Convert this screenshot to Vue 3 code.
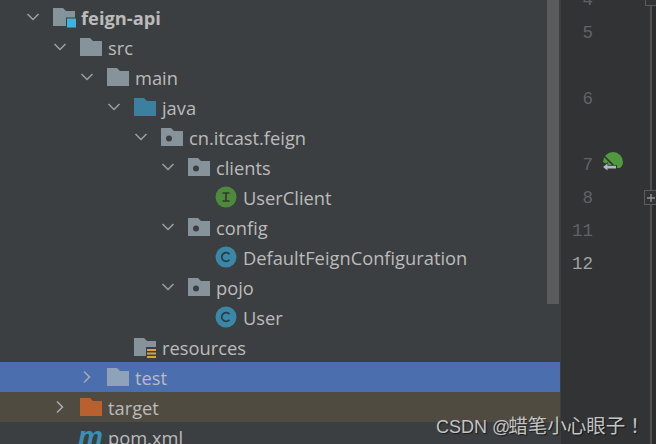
<script setup>
const rows = [
  { name: "feign-api", depth: 0, arrow: "down", icon: "module", bold: true },
  { name: "src", depth: 1, arrow: "down", icon: "folder" },
  { name: "main", depth: 2, arrow: "down", icon: "folder" },
  { name: "java", depth: 3, arrow: "down", icon: "source" },
  { name: "cn.itcast.feign", depth: 4, arrow: "down", icon: "package" },
  { name: "clients", depth: 5, arrow: "down", icon: "package" },
  { name: "UserClient", depth: 6, icon: "interface" },
  { name: "config", depth: 5, arrow: "down", icon: "package" },
  { name: "DefaultFeignConfiguration", depth: 6, icon: "class" },
  { name: "pojo", depth: 5, arrow: "down", icon: "package" },
  { name: "User", depth: 6, icon: "class" },
  { name: "resources", depth: 3, icon: "resources" },
  { name: "test", depth: 2, arrow: "right", icon: "folder", state: "selected" },
  { name: "target", depth: 1, arrow: "right", icon: "excluded", state: "ignored" },
  { name: "pom.xml", depth: 1, icon: "maven" },
];

const lines = [
  { n: 4, cls: "h-33" },
  { n: 5, cls: "h-66" },
  { n: 6, cls: "h-66" },
  { n: 7, cls: "h-33", impl: true },
  { n: 8, cls: "h-33" },
  { n: 11, cls: "h-33" },
  { n: 12, cls: "h-33", current: true },
];

const folderPath = "M1 3h10l3 3h9v15H1z";
</script>

<template>
  <div class="ide">
    <aside class="project">
      <div class="tree">
        <div
          v-for="row in rows"
          :key="row.name"
          class="row"
          :class="[row.state, `depth-${row.depth}`]"
        >
          <span class="arrow">
            <svg v-if="row.arrow === 'down'" width="14" height="14" viewBox="0 0 14 14">
              <path d="M1.5 4l5.5 5.5L12.5 4" fill="none" stroke="#9da0a2" stroke-width="1.5" />
            </svg>
            <svg v-else-if="row.arrow === 'right'" width="14" height="14" viewBox="0 0 14 14">
              <path d="M4 1.5L9.5 7 4 12.5" fill="none" stroke="#a9acae" stroke-width="1.5" />
            </svg>
          </span>

          <span class="icon">
            <svg v-if="row.icon === 'folder'" width="24" height="24" viewBox="0 0 24 24">
              <path :d="folderPath" :fill="row.state === 'selected' ? '#8ea3ba' : '#87939a'" />
            </svg>
            <svg v-else-if="row.icon === 'source'" width="24" height="24" viewBox="0 0 24 24">
              <path :d="folderPath" fill="#3c80a0" />
            </svg>
            <svg v-else-if="row.icon === 'excluded'" width="24" height="24" viewBox="0 0 24 24">
              <path :d="folderPath" fill="#b8602e" />
            </svg>
            <svg v-else-if="row.icon === 'package'" width="24" height="24" viewBox="0 0 24 24">
              <path :d="folderPath" fill="#87939a" />
              <circle cx="9" cy="13.5" r="3" fill="#3c3f41" />
            </svg>
            <svg v-else-if="row.icon === 'module'" width="24" height="24" viewBox="0 0 24 24">
              <path :d="folderPath" fill="#87939a" />
              <rect x="14" y="12.5" width="11" height="11" fill="#3c3f41" />
              <rect x="15" y="13.5" width="9" height="9" fill="#3cb4e0" />
            </svg>
            <svg v-else-if="row.icon === 'resources'" width="24" height="24" viewBox="0 0 24 24">
              <path :d="folderPath" fill="#87939a" />
              <rect x="13" y="12" width="12" height="13" fill="#3c3f41" />
              <path d="M14 14h9v2h-9zM14 17.5h9v2h-9zM14 21h9v2h-9z" fill="#d9a33a" />
            </svg>
            <svg v-else-if="row.icon === 'interface'" width="24" height="24" viewBox="0 0 24 24">
              <circle cx="12" cy="12" r="10.5" fill="#4e8a3c" />
              <path d="M8.5 8h7M8.5 16h7M12 8v8" stroke="#2f3a2c" stroke-width="1.7" fill="none" />
            </svg>
            <svg v-else-if="row.icon === 'class'" width="24" height="24" viewBox="0 0 24 24">
              <circle cx="12" cy="12" r="10.5" fill="#3a87a8" />
              <path d="M15.5 9.2a4.4 4.4 0 1 0 0 5.6" stroke="#283a44" stroke-width="1.7" fill="none" />
            </svg>
            <svg v-else-if="row.icon === 'maven'" width="24" height="24" viewBox="0 0 24 24">
              <text x="-1" y="21" class="maven-m">m</text>
            </svg>
          </span>

          <span class="label" :class="{ bold: row.bold }">{{ row.name }}</span>
        </div>
      </div>
      <div class="thumb"></div>
    </aside>

    <section class="gutter">
      <div class="numbers">
        <div
          v-for="line in lines"
          :key="line.n"
          class="line"
          :class="[line.cls, { current: line.current }]"
        >
          <span class="num">{{ line.n }}</span>
          <span class="mark">
            <svg v-if="line.impl" width="24" height="24" viewBox="0 0 24 24">
              <path d="M2 11a10 10 0 0 1 20 0c0 2.400-1 4.400-3 6h-6z" fill="#4f9a3f" />
              <path d="M3 5l13 13" stroke="#313335" stroke-width="1.7" />
              <path d="M1 16l6-5v3h9v4H7v3z" fill="#313335" />
              <path d="M2 16l4.500-3.600v2.400h8.500v2.600H6.500v2.200z" fill="#aeb9c0" />
            </svg>
          </span>
        </div>
      </div>
      <div class="fold">
        <span class="fold-end"></span>
        <span class="fold-plus">
          <svg width="10" height="10" viewBox="0 0 10 10">
            <path d="M1 5h8M5 1v8" stroke="#8f9193" stroke-width="1.4" />
          </svg>
        </span>
      </div>
    </section>

    <div class="watermark">CSDN @<span class="cjk">蜡笔小心眼子</span><span class="bang">！</span></div>
  </div>
</template>

<style scoped>
.ide {
  position: relative;
  width: 656px;
  height: 444px;
  display: flex;
  overflow: hidden;
  background: #313335;
  font-family: "Open Sans", "Noto Sans", sans-serif;
}

.project {
  position: relative;
  width: 561px;
  height: 100%;
  background: #3c3f41;
  flex-shrink: 0;
}

.tree {
  width: 560px;
  padding-top: 2px;
}

.row {
  height: 30px;
  display: flex;
  align-items: center;
  color: #bbbbbb;
  font-size: 18.3px;
}

.row.selected {
  background: #4b6eaf;
}

.row.ignored {
  background: #4f4b41;
}

.depth-0 { padding-left: 26px; }
.depth-1 { padding-left: 53px; }
.depth-2 { padding-left: 80px; }
.depth-3 { padding-left: 107px; }
.depth-4 { padding-left: 134px; }
.depth-5 { padding-left: 161px; }
.depth-6 { padding-left: 188px; }

.arrow {
  width: 14px;
  height: 14px;
  margin-right: 12px;
  flex-shrink: 0;
}

.icon {
  width: 24px;
  height: 24px;
  margin-right: 5px;
  flex-shrink: 0;
}

.icon svg,
.arrow svg,
.mark svg {
  display: block;
  overflow: visible;
}

.maven-m {
  font-family: "Liberation Sans", sans-serif;
  font-size: 28px;
  font-weight: 700;
  font-style: italic;
  fill: #3a8fb5;
}

.label {
  white-space: nowrap;
}

.bold {
  font-weight: 700;
}

.thumb {
  position: absolute;
  top: 0;
  left: 547px;
  width: 12px;
  height: 304px;
  background: #595b5d;
}

.gutter {
  flex: 1;
  display: flex;
}

.numbers {
  width: 89px;
  margin-top: -16px;
  flex-shrink: 0;
}

.line {
  display: flex;
  align-items: flex-start;
  color: #606366;
  font-family: "Liberation Mono", monospace;
  font-size: 17.5px;
  line-height: 33px;
}

.h-33 { height: 33px; }
.h-66 { height: 66px; }

.line.current {
  color: #a4a3a3;
}

.num {
  width: 32px;
  text-align: right;
  flex-shrink: 0;
}

.mark {
  margin: 2px 0 0 8px;
}

.fold {
  position: relative;
  flex: 1;
  border-left: 2px solid #4d4f51;
  background: #2b2b2b;
}

.fold-end {
  position: absolute;
  left: -7px;
  top: -8px;
  width: 13px;
  height: 14px;
  border: 1px solid #5a5c5e;
  box-sizing: border-box;
  background: #313335;
}

.fold-plus {
  position: absolute;
  left: -8px;
  top: 190px;
  width: 14px;
  height: 15px;
  border: 1px solid #5a5c5e;
  box-sizing: border-box;
  background: #313335;
  display: flex;
  align-items: center;
  justify-content: center;
}

.watermark {
  position: absolute;
  left: 436px;
  top: 412px;
  color: #c4c4c4;
  font-family: "Liberation Sans", "Noto Sans CJK SC", sans-serif;
  font-size: 18px;
  line-height: 26px;
  white-space: nowrap;
  text-shadow: 1px 1px 1px rgba(0, 0, 0, 0.6);
}

.cjk {
  margin-left: -2px;
  font-size: 19.5px;
}

.bang {
  font-family: "Noto Sans CJK TC", sans-serif;
  font-size: 19.5px;
}
</style>
